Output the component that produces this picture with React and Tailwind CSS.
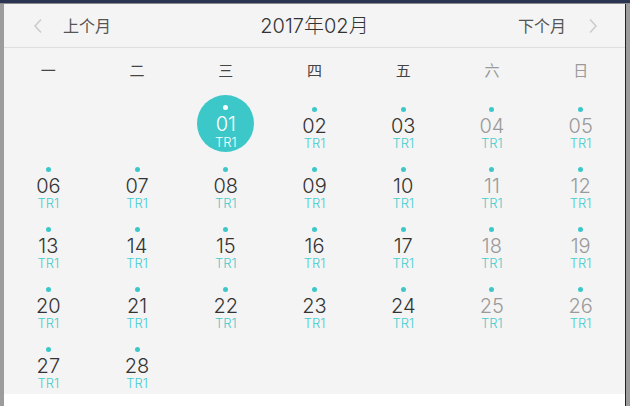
import React from 'react';

const weekdays = ['一', '二', '三', '四', '五', '六', '日'];

// Feb 2017 starts on Wednesday
const days = [
  null, null, ...Array.from({ length: 28 }, (_, i) => i + 1),
];

const rows = [];
for (let i = 0; i < days.length; i += 7) rows.push(days.slice(i, i + 7));

const pad = (n) => String(n).padStart(2, '0');

const Chevron = ({ dir }) => (
  <svg width="10" height="16" viewBox="0 0 10 16" className="shrink-0">
    <path
      d={dir === 'left' ? 'M8 1.5 L2 8 L8 14.5' : 'M2 1.5 L8 8 L2 14.5'}
      fill="none"
      stroke="#cccccc"
      strokeWidth="1.6"
    />
  </svg>
);

const DayCell = ({ day, col }) => {
  if (!day) return <div className="h-[60px]" />;
  const selected = day === 1;
  const weekend = col >= 5;
  if (selected) {
    return (
      <div className="h-[60px] flex items-start justify-center">
        <div className="w-[57px] h-[57px] mt-[1px] rounded-full bg-[#3cc8c9] flex flex-col items-center">
          <div className="w-[5px] h-[5px] rounded-full bg-white mt-[10px]" />
          <span className="text-[20px] leading-[20px] font-light text-white mt-[4px]">{pad(day)}</span>
          <span className="text-[13px] leading-[15px] font-light text-white mt-[1px]">TR1</span>
        </div>
      </div>
    );
  }
  return (
    <div className="h-[60px] flex flex-col items-center">
      <div className="w-[5px] h-[5px] rounded-full bg-[#3cc8c9] mt-[13px]" />
      <span className={`text-[20px] leading-[20px] font-light mt-[4px] ${weekend ? 'text-[#9a9a9a]' : 'text-[#333333]'}`}>
        {pad(day)}
      </span>
      <span className="text-[13px] leading-[15px] font-light text-[#45cdce]">TR1</span>
    </div>
  );
};

export default function App() {
  return (
    <div
      className="w-[630px] h-[406px] flex flex-col bg-[#9c9c9c] overflow-hidden"
      style={{ fontFamily: 'Inter, "Noto Sans CJK SC", sans-serif' }}
    >
      <div className="h-[3px] bg-[#2b3450] shrink-0" />
      <div className="h-[1px] bg-[#8a8a8a] shrink-0" />
      <div className="flex flex-1 min-h-0">
        <div className="w-[4px] bg-[#9c9c9c]" />
        <div className="flex-1 flex flex-col bg-white">
          {/* Calendar panel */}
          <div className="h-[390px] bg-[#f4f4f4] flex flex-col">
            {/* Header */}
            <div className="h-[44px] grid grid-cols-3 items-center border-b border-[#dedede] shrink-0">
              <div className="flex items-center pl-[29px] gap-[20px] text-[16px] text-[#555555]">
                <Chevron dir="left" />
                <span>上个月</span>
              </div>
              <div className="text-center text-[20px] font-light text-[#333333]">2017年02月</div>
              <div className="flex items-center justify-end pr-[27px] gap-[22px] text-[16px] text-[#555555]">
                <span>下个月</span>
                <Chevron dir="right" />
              </div>
            </div>
            {/* Weekdays */}
            <div className="grid grid-cols-7 h-[46px] items-center shrink-0">
              {weekdays.map((w, i) => (
                <div
                  key={w}
                  className={`text-center text-[15px] ${i >= 5 ? 'text-[#9a9a9a]' : 'text-[#444444]'}`}
                >
                  {w}
                </div>
              ))}
            </div>
            {/* Days */}
            <div className="flex flex-col">
              {rows.map((row, ri) => (
                <div key={ri} className="grid grid-cols-7">
                  {row.map((d, ci) => (
                    <DayCell key={ci} day={d} col={ci} />
                  ))}
                </div>
              ))}
            </div>
          </div>
        </div>
        <div className="w-[1px] bg-[#222222]" />
        <div className="w-[4px] bg-[#9c9c9c]" />
      </div>
    </div>
  );
}
